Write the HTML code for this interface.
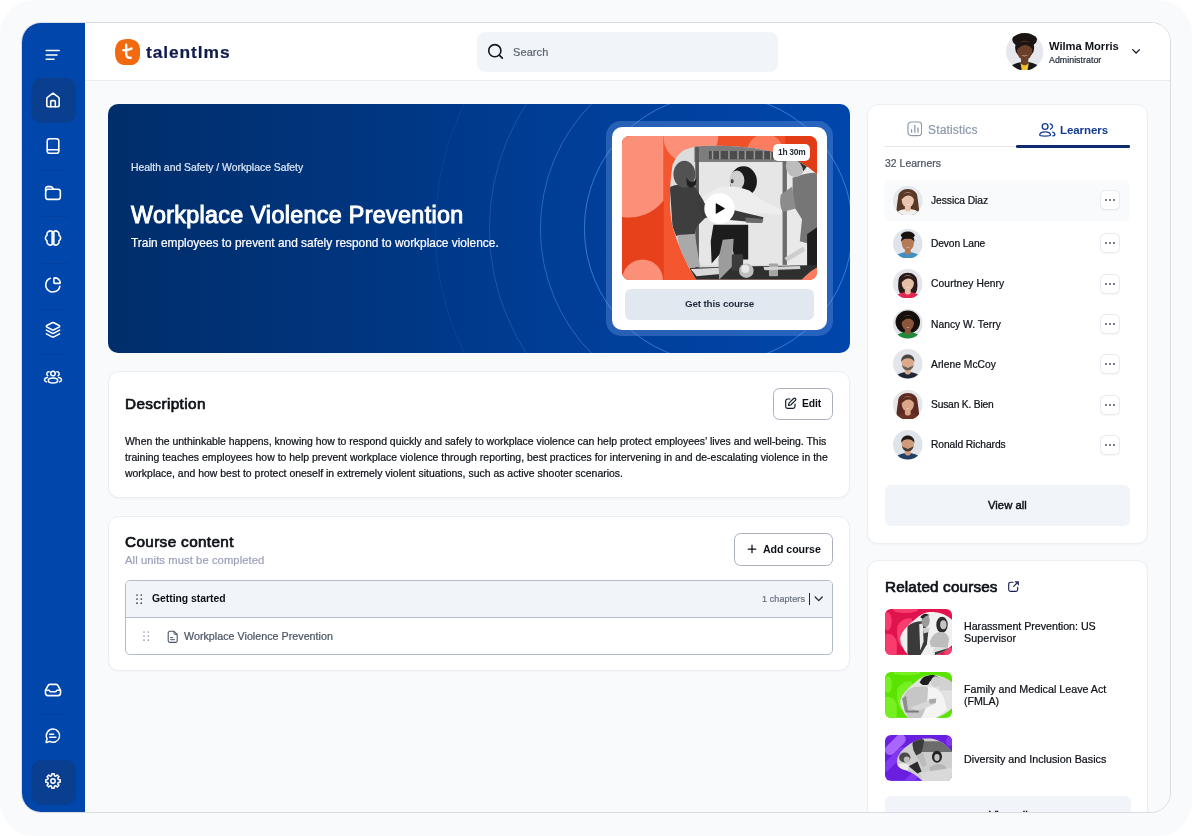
<!DOCTYPE html>
<html lang="en">
<head>
<meta charset="utf-8">
<title>Workplace Violence Prevention - TalentLMS</title>
<style>
*{box-sizing:border-box;margin:0;padding:0}
html,body{width:1192px;height:836px;overflow:hidden;background:#fff;font-family:"Liberation Sans",sans-serif;color:#0d1117}
.abs{position:absolute}
.t{position:absolute;white-space:nowrap;line-height:1;will-change:transform;-webkit-text-stroke:.22px currentColor}
#stage{position:relative;width:1192px;height:836px;overflow:hidden;background:#f8fafc;border-radius:34px}
#win{position:absolute;left:22px;top:23px;width:1148px;height:789px;border-radius:19px;background:#f8fafc;overflow:hidden}
#winb{position:absolute;left:21px;top:22px;width:1150px;height:791px;border-radius:20px;border:1px solid #d9dde3;pointer-events:none}
#side{position:absolute;left:0;top:0;width:62.600px;height:789px;background:#0046ab}
.navact{position:absolute;left:8.5px;width:45px;height:45px;border-radius:11px;background:#0a3e8e}
.navsep{position:absolute;left:18px;width:27px;height:1px;background:rgba(0,30,90,.16)}
.ico{position:absolute;fill:none;stroke:#fff;stroke-linecap:round;stroke-linejoin:round}
#head{position:absolute;left:63px;top:0;width:1085px;height:58px;background:#fff;border-bottom:1px solid #e9edf2}
#search{position:absolute;left:455px;top:9px;width:301px;height:39.500px;border-radius:8px;background:#f1f5f9}
.card{position:absolute;background:#fff;border:1px solid #ebeff3;border-radius:11px;box-shadow:0 1px 2px rgba(16,24,40,.03)}
#hero{position:absolute;left:86px;top:81px;width:742px;height:249px;border-radius:10px;overflow:hidden;background:linear-gradient(90deg,#002e6b 0%,#00347c 30%,#003e97 62%,#0046ab 100%)}
.btn{position:absolute;border:1px solid #aab1bd;border-radius:6.500px;background:#fff}
.more{position:absolute;left:1078px;width:20px;height:20px;border:1px solid #e7eaf0;border-radius:5.500px;background:#fff;box-shadow:0 1px 1.500px rgba(16,24,40,.04)}
.more i{position:absolute;top:8px;width:2px;height:2px;border-radius:50%;background:#4b5563}
.av{position:absolute;left:871.500px;width:29.500px;height:29.500px;border-radius:50%}
.thumb{position:absolute;left:862.700px;width:67.300px;height:46px;border-radius:6px;overflow:hidden}
</style>
</head>
<body>
<div id="stage">
<div id="winb"></div>
<div id="win">
  <div id="side">
    <svg class="abs" style="left:23px;top:25.600px" width="16" height="12" viewBox="0 0 16 12" fill="none" stroke="#fff" stroke-width="1.500" stroke-linecap="round"><path d="M1.200 1.400h13M1.200 5.900h10.800M1.200 10.300h7.800"/></svg>
    <div class="navact" style="top:55px"></div>
    <div class="navact" style="top:736.500px"></div>
    <div class="navsep" style="top:147px"></div>
    <div class="navsep" style="top:193px"></div>
    <div class="navsep" style="top:239.5px"></div>
    <div class="navsep" style="top:285.5px"></div>
    <div class="navsep" style="top:331px"></div>
    <div class="navsep" style="top:691px"></div>
    <!-- home -->
    <svg class="ico" style="left:19.1px;top:65.4px" width="24" height="24" viewBox="-12 -12 24 24" stroke-width="1.6"><path d="M0-6.800 5.300-2.900a2 2 0 0 1 .900 1.700V4.900a1.900 1.900 0 0 1-1.900 1.900h-8.600a1.900 1.900 0 0 1-1.900-1.900V-1.200a2 2 0 0 1 .900-1.700Z"/><path d="M-2.300 6.700V1.600a1 1 0 0 1 1-1h2.600a1 1 0 0 1 1 1v5.100"/></svg>
    <!-- book -->
    <svg class="ico" style="left:19.0px;top:111.4px" width="24" height="24" viewBox="-12 -12 24 24" stroke-width="1.6"><rect x="-5.800" y="-7.200" width="11.600" height="14.400" rx="2.300"/><path d="M-5.800 3.700H5.800"/></svg>
    <!-- folder -->
    <svg class="ico" style="left:19.0px;top:157.5px" width="24" height="24" viewBox="-12 -12 24 24" stroke-width="1.6"><rect x="-7.350" y="-3.700" width="14.700" height="10.100" rx="2.300"/><path d="M-7.350-2v-2.400a2 2 0 0 1 2-2h2.900a2 2 0 0 1 1.500.700l1.700 2"/></svg>
    <!-- brain -->
    <svg class="ico" style="left:19.0px;top:203.3px" width="24" height="24" viewBox="-12 -12 24 24" stroke-width="1.6"><path d="M-.85-6.600A3.500 3.500 0 0 0-6-2.700 3.050 3.050 0 0 0-6 2.700 3.500 3.500 0 0 0-.85 6.600Z"/><path d="M-.85-6.600A3.500 3.500 0 0 0-6-2.700 3.050 3.050 0 0 0-6 2.700 3.500 3.500 0 0 0-.85 6.600Z" transform="scale(-1 1)"/></svg>
    <!-- pie -->
    <svg class="ico" style="left:19.2px;top:249.5px" width="24" height="24" viewBox="-12 -12 24 24" stroke-width="1.6"><path d="M-2.76 -6.68A7.100 7.100 0 1 0 6.84 1.38"/><path d="M.900-6.500a.6.600 0 0 1 .600-.600A5.900 5.900 0 0 1 7.300-2.200a.6.600 0 0 1-.600.600H1.700a.8.800 0 0 1-.800-.800Z"/></svg>
    <!-- layers -->
    <svg class="ico" style="left:19.1px;top:295.3px" width="24" height="24" viewBox="-12 -12 24 24" stroke-width="1.6"><path d="M-.9-7.200a2 2 0 0 1 1.800 0l5.200 2.700a.9.900 0 0 1 0 1.600L.9-.2a2 2 0 0 1-1.800 0l-5.200-2.700a.9.900 0 0 1 0-1.600Z"/><path d="M-6.600.1-.9 3.100a2 2 0 0 0 1.800 0L6.600.1"/><path d="M-6.600 3.900-.9 6.900a2 2 0 0 0 1.800 0l5.700-3"/></svg>
    <!-- people -->
    <svg class="ico" style="left:18.9px;top:341.5px" width="24" height="24" viewBox="-12 -12 24 24" stroke-width="1.5"><circle cx="0" cy="-3.500" r="2.300"/><ellipse cx="0" cy="3.400" rx="4.700" ry="2.500"/><path d="M-3.900-5.200a2.100 2.100 0 0 0-1.300 3.900M-5.600.6c-1.700.3-2.900 1.200-2.900 2.400 0 .8.700 1.500 2 1.900"/><path d="M-3.900-5.200a2.100 2.100 0 0 0-1.300 3.900M-5.600.6c-1.700.3-2.900 1.200-2.900 2.400 0 .8.700 1.500 2 1.900" transform="scale(-1 1)"/></svg>
    <!-- inbox -->
    <svg class="ico" style="left:19.2px;top:654.5px" width="24" height="24" viewBox="-12 -12 24 24" stroke-width="1.6"><path d="M-7.500.3-5.200-4a2.600 2.600 0 0 1 2.300-1.600h5.800A2.600 2.600 0 0 1 5.200-4L7.500.3v3a2.300 2.300 0 0 1-2.300 2.300H-5.200A2.300 2.300 0 0 1-7.500 3.300Z"/><path d="M-7.500.3h3.300a.8.800 0 0 1 .700.500 1.600 1.600 0 0 0 1.500 1h4a1.600 1.600 0 0 0 1.500-1 .8.800 0 0 1 .700-.500h3.300"/></svg>
    <!-- chat -->
    <svg class="ico" style="left:19.1px;top:700.5px" width="24" height="24" viewBox="-12 -12 24 24" stroke-width="1.5"><path d="M0-6.900a6.600 6.600 0 1 1-3.300 12.300L-6.300 6.500a.5.500 0 0 1-.6-.6l1-3.100A6.600 6.600 0 0 1 0-6.900Z"/><path d="M-3.300-1.700H.6M-3.300 1.200h6.200"/></svg>
    <!-- gear -->
    <svg class="ico" style="left:19.0px;top:746.1px" width="24" height="24" viewBox="-12 -12 24 24" stroke-width="1.5"><circle r="2.200"/><path d="M-1.20 -7.20 L1.20 -7.20 L1.42 -5.31 L2.75 -4.76 L4.24 -5.94 L5.94 -4.24 L4.76 -2.75 L5.31 -1.42 L7.20 -1.20 L7.20 1.20 L5.31 1.42 L4.76 2.75 L5.94 4.24 L4.24 5.94 L2.75 4.76 L1.42 5.31 L1.20 7.20 L-1.20 7.20 L-1.42 5.31 L-2.75 4.76 L-4.24 5.94 L-5.94 4.24 L-4.76 2.75 L-5.31 1.42 L-7.20 1.20 L-7.20 -1.20 L-5.31 -1.42 L-4.76 -2.75 L-5.94 -4.24 L-4.24 -5.94 L-2.75 -4.76 L-1.42 -5.31Z"/></svg>
  </div>
  <div id="head"></div>
  <div id="search"></div>
  <div id="hero">
  <svg style="position:absolute;left:0;top:0" width="742" height="249" viewBox="0 0 742 249" fill="none" stroke="#5aa7ff" stroke-width="1"><circle cx="610.4" cy="124.6" r="134" stroke-opacity="0.55"/><circle cx="610.4" cy="124.6" r="178" stroke-opacity="0.4"/><circle cx="610.4" cy="124.6" r="229" stroke-opacity="0.24"/><circle cx="610.4" cy="124.6" r="283" stroke-opacity="0.1"/></svg>
  </div>
  <div class="card" style="left:86px;top:348px;width:742px;height:127px"></div>
  <div class="card" style="left:86px;top:493px;width:742px;height:155px"></div>
  <div class="card" style="left:845.400px;top:80.600px;width:280.600px;height:440px"></div>
  <div class="card" style="left:845.400px;top:537px;width:280.600px;height:300px"></div>
  <svg style="position:absolute;left:93.0px;top:15.8px;" width="25.2" height="26.4" viewBox="0 0 25.2 26.4"><path d="M12.600 0C20.500 0 25.200 3.200 25.200 13.200S20.500 26.400 12.600 26.400 0 23.200 0 13.200 4.700 0 12.600 0Z" fill="#f26a0f"/><path d="M11.200 5.700v9.500c0 2.400 1.600 3.900 4.500 3.600M8.300 11.200c2.600.2 5.500-.3 8.200-1.600" fill="none" stroke="#fff" stroke-width="2.350" stroke-linecap="round"/></svg>
  <svg style="position:absolute;left:464.0px;top:19.0px;" width="20.0" height="20.0" viewBox="486 42 20 20"><circle cx="494.800" cy="50.700" r="6.100" fill="none" stroke="#111827" stroke-width="1.600"/><path d="M499.300 55.200l3 2.900" stroke="#111827" stroke-width="1.700" stroke-linecap="round"/></svg>
  <svg style="position:absolute;left:1108.0px;top:22.0px;" width="12.0" height="12.0" viewBox="1130 45 12 12"><path d="M1132.700 49.600l3.400 3.400 3.400-3.400" fill="none" stroke="#111827" stroke-width="1.300" stroke-linecap="round" stroke-linejoin="round"/></svg>
  <div style="position:absolute;left:584.1px;top:98.1px;width:226.5px;height:214.9px;border-radius:15px;background:rgba(120,165,235,.32)"></div>
  <div style="position:absolute;left:589.6px;top:103.6px;width:215.5px;height:203.9px;border-radius:10px;background:#fff"></div>
  <div style="position:absolute;left:602.8px;top:266.0px;width:189.3px;height:31.0px;border-radius:6px;background:#e2e8f0"></div>
  <div class="btn" style="position:absolute;left:751.0px;top:365.0px;width:60.0px;height:31.5px;"></div>
  <svg style="position:absolute;left:762.0px;top:374.0px;" width="13.0" height="13.0" viewBox="0 0 13 13"><path d="M6 2H3.600A1.900 1.900 0 0 0 1.700 3.900v5.500a1.900 1.900 0 0 0 1.900 1.900h5.500A1.900 1.900 0 0 0 11 9.400V7" fill="none" stroke="#111827" stroke-width="1.150" stroke-linecap="round"/><path d="M9.600 1.500a1.200 1.200 0 0 1 1.800 1.800L6.700 8l-2.200.5.500-2.300Z" fill="none" stroke="#111827" stroke-width="1.150" stroke-linejoin="round"/></svg>
  <div class="btn" style="position:absolute;left:712.0px;top:510.0px;width:99.0px;height:32.5px;"></div>
  <svg style="position:absolute;left:724.7px;top:521.3px;" width="10.0" height="10.0" viewBox="0 0 10 10"><path d="M5 1.200v7.600M1.200 5h7.600" stroke="#0d1117" stroke-width="1.250" stroke-linecap="round"/></svg>
  <div style="position:absolute;left:103.0px;top:557.0px;width:708.0px;height:75.0px;border:1px solid #b4bbc8;border-radius:5px;background:#fff;overflow:hidden"><div style="position:absolute;left:0;top:0;right:0;height:37px;background:#f1f5f9;border-bottom:1px solid #b4bbc8"></div></div>
  <svg style="position:absolute;left:114.0px;top:570.6px;" width="7.0" height="11.0" viewBox="0 0 7 11"><g fill="#374151"><circle cx="1.0" cy="1.0" r=".850"/><circle cx="1.0" cy="5.1" r=".850"/><circle cx="1.0" cy="9.2" r=".850"/><circle cx="5.3" cy="1.0" r=".850"/><circle cx="5.3" cy="5.1" r=".850"/><circle cx="5.3" cy="9.2" r=".850"/></g></svg>
  <svg style="position:absolute;left:121.2px;top:608.2px;" width="7.0" height="11.0" viewBox="0 0 7 11"><g fill="#9aa3b2"><circle cx="1.0" cy="1.0" r=".850"/><circle cx="1.0" cy="5.1" r=".850"/><circle cx="1.0" cy="9.2" r=".850"/><circle cx="5.3" cy="1.0" r=".850"/><circle cx="5.3" cy="5.1" r=".850"/><circle cx="5.3" cy="9.2" r=".850"/></g></svg>
  <svg style="position:absolute;left:145.0px;top:606.5px;" width="12.0" height="13.5" viewBox="0 0 12 13.500"><path d="M2.800 1.300h4.200l3.200 3.200v6.300a1.600 1.600 0 0 1-1.600 1.600H2.800a1.600 1.600 0 0 1-1.600-1.600V2.900a1.600 1.600 0 0 1 1.600-1.600Z" fill="none" stroke="#4b5565" stroke-width="1.100" stroke-linejoin="round"/><path d="M7 1.500v1.800a1.200 1.200 0 0 0 1.200 1.200H10" fill="none" stroke="#4b5565" stroke-width="1"/><path d="M3.600 7.600h2.200M3.600 9.700h4" stroke="#4b5565" stroke-width="1" stroke-linecap="round"/></svg>
  <div style="position:absolute;left:786.7px;top:569.7px;width:1.3px;height:12.3px;background:#1f2937"></div>
  <svg style="position:absolute;left:790.0px;top:570.0px;" width="13.0" height="12.0" viewBox="812 593 13 12"><path d="M815.200 597l3.500 3.600 3.500-3.600" fill="none" stroke="#1f2937" stroke-width="1.300" stroke-linecap="round" stroke-linejoin="round"/></svg>
  <div style="position:absolute;left:862.4px;top:123.2px;width:131.6px;height:1.0px;background:#e5e9ef"></div>
  <div style="position:absolute;left:993.8px;top:122.2px;width:114.6px;height:2.5px;background:#0f2a6e;border-radius:1.200px"></div>
  <svg style="position:absolute;left:884.5px;top:98.3px;" width="15.6" height="15.6" viewBox="0 0 15.600 15.600"><rect x="1" y="1" width="13.600" height="13.600" rx="3.200" fill="none" stroke="#8d98ad" stroke-width="1.200"/><path d="M4.600 11.200V8.600M7.800 11.200V4.500M11 11.200V7" stroke="#8d98ad" stroke-width="1.300" stroke-linecap="round"/></svg>
  <svg style="position:absolute;left:1015.5px;top:98.5px;" width="18.5" height="16.0" viewBox="1037.500 121.500 18.500 16"><g fill="none" stroke="#123a94" stroke-width="1.350" stroke-linecap="round"><circle cx="1044.600" cy="126" r="2.900"/><path d="M1039.200 134.600c0-2.200 2.400-3.300 5.400-3.300s5.400 1.100 5.400 3.300c0 1.300-10.800 1.300-10.800 0Z"/><path d="M1049.800 123.300a2.800 2.800 0 0 1 .3 5.400M1052.300 131.600c1.300.5 2.100 1.400 2.100 2.600 0 .7-.9 1.100-2 1.200"/></g></svg>
  <div style="position:absolute;left:862.4px;top:157.2px;width:246.0px;height:40.7px;border-radius:6px;background:#f8fafc"></div>
  <div class="more" style="top:167px"><i style="left:4px"></i><i style="left:8px"></i><i style="left:12px"></i></div>
  <div class="more" style="top:210px"><i style="left:4px"></i><i style="left:8px"></i><i style="left:12px"></i></div>
  <div class="more" style="top:251px"><i style="left:4px"></i><i style="left:8px"></i><i style="left:12px"></i></div>
  <div class="more" style="top:291px"><i style="left:4px"></i><i style="left:8px"></i><i style="left:12px"></i></div>
  <div class="more" style="top:331px"><i style="left:4px"></i><i style="left:8px"></i><i style="left:12px"></i></div>
  <div class="more" style="top:372px"><i style="left:4px"></i><i style="left:8px"></i><i style="left:12px"></i></div>
  <div class="more" style="top:412px"><i style="left:4px"></i><i style="left:8px"></i><i style="left:12px"></i></div>
  <div style="position:absolute;left:863.1px;top:462.4px;width:244.9px;height:40.2px;border-radius:6px;background:#f1f5f9"></div>
  <div style="position:absolute;left:862.8px;top:773.0px;width:245.8px;height:40.0px;border-radius:6px;background:#f1f5f9"></div>
  <svg style="position:absolute;left:985.3px;top:557.0px;" width="13.0" height="13.0" viewBox="0 0 13 13"><path d="M6 2.200H3.500a1.800 1.800 0 0 0-1.800 1.800v5.500a1.800 1.800 0 0 0 1.800 1.800h5.400a1.800 1.800 0 0 0 1.800-1.800V7.400" fill="none" stroke="#182258" stroke-width="1.150" stroke-linecap="round"/><path d="M8.300 1.800h3v3M11.100 2 6.700 6.400" fill="none" stroke="#182258" stroke-width="1.150" stroke-linecap="round" stroke-linejoin="round"/></svg>
  <svg style="position:absolute;left:600.0px;top:112.9px;border-radius:8px" width="195.100" height="143.800" viewBox="22 22 1073 790" preserveAspectRatio="none">
<defs><clipPath id="ph"><path d="M400 86Q500 64 700 84Q860 98 1000 165Q1060 200 1100 238V740Q1060 760 1010 812H430Q350 690 300 520Q270 380 300 180Q330 100 400 86Z"/></clipPath></defs>
<rect x="22" y="22" width="1073" height="790" fill="#e7411b"/>
<rect x="250" y="22" width="230" height="790" fill="#f4562f"/>
<rect x="470" y="22" width="460" height="120" fill="#f0502a"/>
<rect x="920" y="22" width="175" height="260" fill="#e23c17"/>
<circle cx="400" cy="22" r="152" fill="#fb8f78"/>
<rect x="22" y="22" width="228" height="790" fill="#e7411b"/>
<path d="M22 22H250V376A240 240 0 0 1 22 467Z" fill="#fb8f78"/>
<circle cx="810" cy="110" r="100" fill="#fb7c5f"/>
<circle cx="135" cy="812" r="112" fill="#fb8f78"/>
<circle cx="1095" cy="830" r="90" fill="#fb7c5f"/>
<g clip-path="url(#ph)">
<rect x="250" y="50" width="860" height="780" fill="#dcdcdc"/>
<rect x="420" y="70" width="500" height="95" fill="#7d7d7d"/>
<path d="M500 105H880V150H500Z" fill="#4c4c4c"/><path d="M520 105v45M560 105v45M610 105v45M660 105v45M700 105v45M750 105v45M800 105v45M840 105v45" stroke="#9a9a9a" stroke-width="8"/>
<rect x="445" y="165" width="470" height="565" fill="#e6e6e6"/>
<rect x="425" y="80" width="20" height="670" fill="#565656"/>
<rect x="905" y="160" width="24" height="570" fill="#6c6c6c"/>
<rect x="930" y="165" width="180" height="570" fill="#e9e9e9"/>
<!-- right man -->
<path d="M960 252Q1030 222 1100 224V520L1045 612 1000 600 1012 480 962 400Z" fill="#767676"/>
<path d="M1040 562 1100 520V762L1040 752Z" fill="#1e1e1e"/>
<ellipse cx="975" cy="185" rx="52" ry="62" fill="#bdbdbd"/>
<path d="M985 130Q1030 120 1050 175L1020 215Q1010 170 985 160Z" fill="#333"/>
<path d="M895 345 958 300 978 420 905 440Q885 400 895 345Z" fill="#8c8c8c"/>
<path d="M915 692 1018 630 1030 652 932 712Z" fill="#cdcdcd"/>
<!-- woman -->
<ellipse cx="690" cy="272" rx="74" ry="84" fill="#1a1a1a"/>
<ellipse cx="654" cy="266" rx="41" ry="54" fill="#cfcfcf"/>
<ellipse cx="628" cy="270" rx="8" ry="12" fill="#444"/>
<path d="M450 362 560 302Q640 290 722 322L802 382 902 430 896 456 762 442 722 512H540L530 420 470 402Z" fill="#eeeeee"/>
<path d="M525 510H716V700H642L622 600 515 722 510 600Z" fill="#1c1c1c"/>
<!-- left man -->
<path d="M285 302Q330 280 422 300L472 380 482 470 432 520 422 562 320 572 300 520Z" fill="#3e3e3e"/>
<path d="M325 566 422 560 452 742H386L340 650Z" fill="#a9a9a9"/>
<ellipse cx="365" cy="232" rx="60" ry="74" fill="#525252"/>
<path d="M375 250Q410 300 432 250L428 290Q405 318 380 292Z" fill="#1f1f1f"/>
<path d="M432 380 800 468 792 500 470 470Z" fill="#3a3a3a"/>
<path d="M700 470 800 478 792 500 705 498Z" fill="#6b6b6b"/>
<!-- table -->
<path d="M392 746 1100 730V820H430Z" fill="#2f2f2f"/>
<path d="M400 752 562 746 562 780 432 792Z" fill="#d9d9d9"/>
<path d="M576 592 636 586 626 742 556 812 552 700Z" fill="#9c9c9c"/>
<rect x="626" y="672" width="62" height="90" rx="8" fill="#3c3c3c"/>
<circle cx="706" cy="762" r="40" fill="#bfbfbf"/><circle cx="700" cy="752" r="22" fill="#e9e9e9"/>
<rect x="830" y="722" width="50" height="70" rx="5" fill="#a5a5a5"/>
<path d="M800 742 1000 736 1004 752 806 760Z" fill="#d3d3d3"/>
</g>
</svg>
  <div style="position:absolute;left:751.1px;top:120.8px;width:36.600px;height:17px;border-radius:5px;background:#fff"></div>
  <svg style="position:absolute;left:682.0px;top:169.5px" width="31" height="31" viewBox="-15.500 -15.500 31 31"><circle r="15.200" fill="#fff"/><path d="M-3.200-4.600 4.600 0-3.200 4.600Z" fill="#111" stroke="#111" stroke-width="1.200" stroke-linejoin="round"/></svg>
  <svg style="position:absolute;left:983.8px;top:10.1px" width="37.3" height="37.3" viewBox="-50 -50 100 100"><defs><clipPath id="ch"><circle r="50"/></clipPath></defs><g clip-path="url(#ch)"><rect x="-50" y="-50" width="100" height="100" fill="#e6e8ee"/><g transform="translate(0 4) scale(1.22)"><ellipse cx="0" cy="-30" rx="27" ry="17" fill="#1a1412"/><ellipse cx="0" cy="-12" rx="21" ry="22" fill="#1a1412"/><path d="M-42 52C-42 30-24 22-9 20H9C24 22 42 30 42 52Z" fill="#17181c"/><path d="M-9 22H9L4 52H-4Z" fill="#f2c230"/><path d="M-8 6H8V22C4 28-4 28-8 22Z" fill="#6b3f2a"/><ellipse cx="0" cy="-6" rx="17" ry="21" fill="#6b3f2a"/><path d="M-18-6C-20-32 20-32 18-6C12-20-4-24-18-6Z" fill="#1a1412"/><path d="M-7 4Q0 10 7 4Q0 7-7 4Z" fill="#fff" opacity=".9"/></g></g></svg>
  <svg style="position:absolute;left:871.4px;top:162.6px" width="29.6" height="29.6" viewBox="-50 -50 100 100"><defs><clipPath id="c0"><circle r="50"/></clipPath></defs><g clip-path="url(#c0)"><rect x="-50" y="-50" width="100" height="100" fill="#e4e7eb"/><g transform="translate(0 4) scale(1.22)"><path d="M-27-12C-27-44 27-44 27-12C30 10 34 30 30 50H-30C-34 30-30 10-27-12Z" fill="#5a3826"/><path d="M-42 52C-42 30-24 22-9 20H9C24 22 42 30 42 52Z" fill="#f1efee"/><path d="M-8 6H8V22C4 28-4 28-8 22Z" fill="#e9c4ae"/><ellipse cx="0" cy="-6" rx="17" ry="21" fill="#e9c4ae"/><path d="M-18-6C-20-32 20-32 18-6C12-20-4-24-18-6Z" fill="#5a3826"/><path d="M-7 4Q0 10 7 4Q0 7-7 4Z" fill="#fff" opacity=".9"/></g></g></svg>
  <svg style="position:absolute;left:871.4px;top:205.5px" width="29.6" height="29.6" viewBox="-50 -50 100 100"><defs><clipPath id="c1"><circle r="50"/></clipPath></defs><g clip-path="url(#c1)"><rect x="-50" y="-50" width="100" height="100" fill="#dfe4ec"/><g transform="translate(0 4) scale(1.22)"><path d="M-42 52C-42 30-24 22-9 20H9C24 22 42 30 42 52Z" fill="#3f8fc3"/><path d="M-8 6H8V22C4 28-4 28-8 22Z" fill="#b57a56"/><ellipse cx="0" cy="-6" rx="17" ry="21" fill="#b57a56"/><path d="M-18-8C-22-36 22-36 18-8C14-22-14-22-18-8Z" fill="#16110f"/><ellipse cx="0" cy="-27" rx="19" ry="10" fill="#16110f"/><path d="M-7 4Q0 10 7 4Q0 7-7 4Z" fill="#fff" opacity=".9"/></g></g></svg>
  <svg style="position:absolute;left:871.4px;top:245.8px" width="29.6" height="29.6" viewBox="-50 -50 100 100"><defs><clipPath id="c2"><circle r="50"/></clipPath></defs><g clip-path="url(#c2)"><rect x="-50" y="-50" width="100" height="100" fill="#e3e5ea"/><g transform="translate(0 4) scale(1.22)"><path d="M-26-10C-26-42 26-42 26-10C28 6 26 16 22 22H-22C-26 16-28 6-26-10Z" fill="#2a1b18"/><path d="M-42 52C-42 30-24 22-9 20H9C24 22 42 30 42 52Z" fill="#e02651"/><path d="M-8 6H8V22C4 28-4 28-8 22Z" fill="#e6bfa8"/><ellipse cx="0" cy="-6" rx="17" ry="21" fill="#e6bfa8"/><path d="M-18-6C-20-32 20-32 18-6C12-20-4-24-18-6Z" fill="#2a1b18"/><path d="M-7 4Q0 10 7 4Q0 7-7 4Z" fill="#fff" opacity=".9"/></g></g></svg>
  <svg style="position:absolute;left:871.4px;top:286.1px" width="29.6" height="29.6" viewBox="-50 -50 100 100"><defs><clipPath id="c3"><circle r="50"/></clipPath></defs><g clip-path="url(#c3)"><rect x="-50" y="-50" width="100" height="100" fill="#dfe3e8"/><g transform="translate(0 4) scale(1.22)"><ellipse cx="0" cy="-8" rx="34" ry="32" fill="#15100e"/><path d="M-42 52C-42 30-24 22-9 20H9C24 22 42 30 42 52Z" fill="#1f8a3c"/><path d="M-8 6H8V22C4 28-4 28-8 22Z" fill="#8a5538"/><ellipse cx="0" cy="-6" rx="17" ry="21" fill="#8a5538"/><path d="M-18-6C-20-32 20-32 18-6C12-20-4-24-18-6Z" fill="#15100e"/><path d="M-7 4Q0 10 7 4Q0 7-7 4Z" fill="#fff" opacity=".9"/></g></g></svg>
  <svg style="position:absolute;left:871.4px;top:326.4px" width="29.6" height="29.6" viewBox="-50 -50 100 100"><defs><clipPath id="c4"><circle r="50"/></clipPath></defs><g clip-path="url(#c4)"><rect x="-50" y="-50" width="100" height="100" fill="#e2e5ea"/><g transform="translate(0 4) scale(1.22)"><path d="M-42 52C-42 30-24 22-9 20H9C24 22 42 30 42 52Z" fill="#1d2738"/><path d="M-8 6H8V22C4 28-4 28-8 22Z" fill="#d9a98a"/><ellipse cx="0" cy="-6" rx="17" ry="21" fill="#d9a98a"/><path d="M-18-8C-22-36 22-36 18-8C14-22-14-22-18-8Z" fill="#4a4744"/><path d="M-16 0C-14 20 14 20 16 0C10 8-10 8-16 0Z" fill="#4a4744" opacity=".75"/><path d="M-7 4Q0 10 7 4Q0 7-7 4Z" fill="#fff" opacity=".9"/></g></g></svg>
  <svg style="position:absolute;left:871.4px;top:366.7px" width="29.6" height="29.6" viewBox="-50 -50 100 100"><defs><clipPath id="c5"><circle r="50"/></clipPath></defs><g clip-path="url(#c5)"><rect x="-50" y="-50" width="100" height="100" fill="#e4e6ea"/><g transform="translate(0 4) scale(1.22)"><path d="M-27-12C-27-44 27-44 27-12C30 10 34 30 30 50H-30C-34 30-30 10-27-12Z" fill="#5c2a20"/><path d="M-42 52C-42 30-24 22-9 20H9C24 22 42 30 42 52Z" fill="#6a3226"/><path d="M-8 6H8V22C4 28-4 28-8 22Z" fill="#d8a688"/><ellipse cx="0" cy="-6" rx="17" ry="21" fill="#d8a688"/><path d="M-18-6C-20-32 20-32 18-6C12-20-4-24-18-6Z" fill="#5c2a20"/><path d="M-7 4Q0 10 7 4Q0 7-7 4Z" fill="#fff" opacity=".9"/></g></g></svg>
  <svg style="position:absolute;left:871.4px;top:407.0px" width="29.6" height="29.6" viewBox="-50 -50 100 100"><defs><clipPath id="c6"><circle r="50"/></clipPath></defs><g clip-path="url(#c6)"><rect x="-50" y="-50" width="100" height="100" fill="#dfe3ea"/><g transform="translate(0 4) scale(1.22)"><path d="M-42 52C-42 30-24 22-9 20H9C24 22 42 30 42 52Z" fill="#213f66"/><path d="M-8 6H8V22C4 28-4 28-8 22Z" fill="#cf9b78"/><ellipse cx="0" cy="-6" rx="17" ry="21" fill="#cf9b78"/><path d="M-18-8C-22-36 22-36 18-8C14-22-14-22-18-8Z" fill="#221a17"/><path d="M-16 0C-14 20 14 20 16 0C10 8-10 8-16 0Z" fill="#221a17" opacity=".75"/><path d="M-7 4Q0 10 7 4Q0 7-7 4Z" fill="#fff" opacity=".9"/></g></g></svg>
  <svg style="position:absolute;left:863.0px;top:586.0px;border-radius:6px" width="67.400" height="45.900" viewBox="75 75 1005 685" preserveAspectRatio="none"><rect x="75" y="75" width="1005" height="685" fill="#e0134f"/>
<g fill="#f93c6e"><ellipse cx="115" cy="260" rx="60" ry="135"/><path d="M80 450Q200 420 250 560V760H80Z"/><path d="M260 330Q330 200 470 215Q520 300 420 420Q330 520 330 650Q230 560 260 330Z"/><ellipse cx="380" cy="85" rx="185" ry="48"/><circle cx="1030" cy="720" r="70"/></g>
<defs><clipPath id="t1"><path d="M300 500Q330 380 520 230Q640 120 760 118Q960 120 1090 250V600Q980 720 800 770H430Q300 640 300 500Z"/></clipPath></defs>
<g clip-path="url(#t1)"><rect x="280" y="100" width="820" height="680" fill="#f0f0f0"/>
<path d="M410 330Q520 250 640 260L720 420 700 600 600 770H410Z" fill="#3a3a3a"/>
<path d="M585 300 640 290 650 560 600 700Z" fill="#e8e8e8"/>
<ellipse cx="680" cy="250" rx="62" ry="95" fill="#9a9a9a"/><path d="M600 200Q660 110 745 170Q690 160 640 220Z" fill="#222"/>
<path d="M640 360 740 350 730 420 650 440Z" fill="#cfcfcf"/>
<ellipse cx="925" cy="310" rx="85" ry="120" fill="#2b2b2b"/><ellipse cx="945" cy="310" rx="48" ry="66" fill="#c4c4c4"/>
<path d="M740 560Q800 420 900 420Q1000 410 1030 520L1010 660 760 640Z" fill="#bdbdbd"/><path d="M800 650H1000V770H790Z" fill="#dcdcdc"/><path d="M820 720 1080 640V770H820Z" fill="#3b3b3b"/></g></svg>
  <svg style="position:absolute;left:863.0px;top:649.0px;border-radius:6px" width="67.400" height="45.900" viewBox="75 75 1005 685" preserveAspectRatio="none"><rect x="75" y="75" width="1005" height="685" fill="#5be300"/>
<g fill="#76f022"><ellipse cx="120" cy="260" rx="55" ry="130"/><path d="M80 450Q200 420 250 560V760H80Z"/><path d="M260 330Q330 200 470 215Q520 300 420 420Q330 520 330 650Q230 560 260 330Z"/><ellipse cx="400" cy="85" rx="200" ry="40"/></g>
<defs><clipPath id="t2"><path d="M300 500Q330 380 520 230Q640 120 760 118Q960 120 1090 250V600Q980 720 800 770H430Q300 640 300 500Z"/></clipPath></defs>
<g clip-path="url(#t2)"><rect x="280" y="100" width="820" height="680" fill="#e2e2e2"/>
<rect x="880" y="150" width="220" height="200" fill="#d2d2d2"/>
<path d="M590 230Q640 110 800 120Q860 130 880 170Q760 160 720 260Q640 290 590 230Z" fill="#1e1e1e"/>
<ellipse cx="830" cy="220" rx="70" ry="80" fill="#cfcfcf"/>
<path d="M340 470Q380 330 520 300L700 290 760 420 700 620 600 770H420L380 650Z" fill="#c6c6c6"/>
<path d="M720 300Q900 300 960 480L1000 640 820 770H620L700 560Z" fill="#f4f4f4"/>
<path d="M450 600Q600 560 760 480L840 500 800 560 560 660Z" fill="#d8d8d8"/><path d="M730 480 840 470 830 540 740 550Z" fill="#a9a9a9"/>
<path d="M330 470 390 430 420 660 370 660Z" fill="#8e8e8e"/><rect x="380" y="650" width="200" height="30" fill="#7a7a7a"/></g></svg>
  <svg style="position:absolute;left:863.0px;top:712.0px;border-radius:6px" width="67.400" height="45.900" viewBox="75 75 1005 685" preserveAspectRatio="none"><rect x="75" y="75" width="1005" height="685" fill="#6a1ee0"/>
<g stroke-linecap="round" fill="none"><path d="M150 300 310 140" stroke="#a866ff" stroke-width="150"/><path d="M80 560 330 320" stroke="#8237f0" stroke-width="120"/><path d="M430 760 560 640" stroke="#8237f0" stroke-width="110"/></g>
<ellipse cx="1040" cy="170" rx="55" ry="70" fill="#8237f0"/>
<defs><clipPath id="t3"><path d="M250 470Q260 330 460 200Q600 110 760 125Q960 160 1090 350V770H640Q520 640 380 600Q250 570 250 470Z"/></clipPath></defs>
<g clip-path="url(#t3)"><rect x="240" y="100" width="860" height="680" fill="#cdcdcd"/>
<path d="M590 170H1000L1090 330H600Z" fill="#6c6c6c"/>
<path d="M490 180Q560 90 660 150L640 260 600 400 540 380Q470 280 490 180Z" fill="#3a3a3a"/>
<path d="M540 380 640 330 700 520 640 560Z" fill="#bcbcbc"/>
<ellipse cx="370" cy="410" rx="85" ry="75" fill="#4a4a4a"/><ellipse cx="400" cy="440" rx="45" ry="45" fill="#bdbdbd"/>
<path d="M260 520Q330 470 430 520L420 600 300 590Z" fill="#ededed"/>
<path d="M430 540 560 470 620 620 560 650Z" fill="#2b2b2b"/>
<ellipse cx="850" cy="400" rx="75" ry="90" fill="#222"/><ellipse cx="850" cy="410" rx="40" ry="52" fill="#c2c2c2"/>
<path d="M740 560Q850 470 980 540L1000 640 760 640Z" fill="#b5b5b5"/>
<path d="M600 640 1090 560V770H640Z" fill="#d9d9d9"/></g></svg>
  <span class="t" style="left:124.10px;top:21.002px;font-size:17.4px;font-weight:700;color:#101c4c;letter-spacing:0.905px;">talentlms</span>
  <span class="t" style="left:490.90px;top:24.004px;font-size:11px;color:#5b6472;letter-spacing:0.088px;">Search</span>
  <span class="t" style="left:1027.40px;top:18.010px;font-size:11.2px;font-weight:700;letter-spacing:-0.032px;-webkit-text-stroke:0;">Wilma Morris</span>
  <span class="t" style="left:1027.40px;top:33.010px;font-size:8.8px;color:#1f2937;letter-spacing:0.039px;">Administrator</span>
  <span class="t" style="left:108.70px;top:140.012px;font-size:10.4px;color:#dbe6f7;letter-spacing:-0.009px;">Health and Safety / Workplace Safety</span>
  <span class="t" style="left:109.40px;top:181.011px;font-size:23.3px;color:#ffffff;letter-spacing:0.332px;-webkit-text-stroke:1px #fff;">Workplace Violence Prevention</span>
  <span class="t" style="left:108.70px;top:215.011px;font-size:11.9px;color:#ffffff;">Train employees to prevent and safely respond to workplace violence.</span>
  <span class="t" style="left:756.00px;top:125.002px;font-size:8.4px;font-weight:700;color:#1f2937;letter-spacing:-0.255px;-webkit-text-stroke:0;">1h 30m</span>
  <span class="t" style="left:662.80px;top:276.007px;font-size:9.8px;font-weight:700;color:#1e293b;letter-spacing:-0.145px;-webkit-text-stroke:0;">Get this course</span>
  <span class="t" style="left:102.80px;top:373.011px;font-size:15.3px;letter-spacing:0.388px;-webkit-text-stroke:.7px #0d1117;">Description</span>
  <span class="t" style="left:779.60px;top:376.009px;font-size:10.4px;font-weight:700;letter-spacing:-0.142px;-webkit-text-stroke:0;">Edit</span>
  <span class="t" style="left:103.30px;top:414.013px;font-size:10.45px;letter-spacing:-0.006px;">When the unthinkable happens, knowing how to respond quickly and safely to workplace violence can help protect employees&rsquo; lives and well-being. This</span>
  <span class="t" style="left:103.30px;top:430.010px;font-size:10.45px;letter-spacing:0.020px;">training teaches employees how to help prevent workplace violence through reporting, best practices for intervening in and de-escalating violence in the</span>
  <span class="t" style="left:103.30px;top:446.013px;font-size:10.45px;letter-spacing:0.007px;">workplace, and how best to protect oneself in extremely violent situations, such as active shooter scenarios.</span>
  <span class="t" style="left:103.00px;top:511.008px;font-size:15.3px;letter-spacing:0.365px;-webkit-text-stroke:.7px #0d1117;">Course content</span>
  <span class="t" style="left:103.30px;top:532.010px;font-size:11.2px;color:#9b9fbb;letter-spacing:0.096px;">All units must be completed</span>
  <span class="t" style="left:741.00px;top:521.011px;font-size:10.6px;font-weight:700;letter-spacing:-0.053px;-webkit-text-stroke:0;">Add course</span>
  <span class="t" style="left:130.40px;top:571.012px;font-size:10.4px;font-weight:700;letter-spacing:-0.029px;-webkit-text-stroke:0;">Getting started</span>
  <span class="t" style="left:739.80px;top:572.016px;font-size:9.0px;color:#6b7280;letter-spacing:0.097px;">1 chapters</span>
  <span class="t" style="left:161.80px;top:608.008px;font-size:10.7px;color:#4b5565;letter-spacing:0.027px;">Workplace Violence Prevention</span>
  <span class="t" style="left:905.70px;top:101.014px;font-size:12.0px;color:#8d98ad;letter-spacing:0.154px;">Statistics</span>
  <span class="t" style="left:1037.60px;top:102.015px;font-size:11.5px;font-weight:700;color:#123a94;letter-spacing:-0.071px;-webkit-text-stroke:0;">Learners</span>
  <span class="t" style="left:863.10px;top:136.003px;font-size:10.4px;color:#4b5563;letter-spacing:0.053px;">32 Learners</span>
  <span class="t" style="left:908.90px;top:173.014px;font-size:10.25px;letter-spacing:-0.039px;">Jessica Diaz</span>
  <span class="t" style="left:908.90px;top:216.005px;font-size:10.25px;letter-spacing:-0.120px;">Devon Lane</span>
  <span class="t" style="left:908.90px;top:256.008px;font-size:10.25px;letter-spacing:0.109px;">Courtney Henry</span>
  <span class="t" style="left:908.90px;top:297.011px;font-size:10.25px;letter-spacing:0.037px;">Nancy W. Terry</span>
  <span class="t" style="left:908.90px;top:337.014px;font-size:10.25px;letter-spacing:0.048px;">Arlene McCoy</span>
  <span class="t" style="left:908.90px;top:377.002px;font-size:10.25px;letter-spacing:-0.181px;">Susan K. Bien</span>
  <span class="t" style="left:908.90px;top:417.005px;font-size:10.25px;letter-spacing:-0.077px;">Ronald Richards</span>
  <span class="t" style="left:966.10px;top:477.000px;font-size:11.2px;letter-spacing:0.063px;-webkit-text-stroke:.45px #0d1117;">View all</span>
  <span class="t" style="left:862.80px;top:556.011px;font-size:15.3px;letter-spacing:0.140px;-webkit-text-stroke:.7px #0d1117;">Related courses</span>
  <span class="t" style="left:941.70px;top:598.011px;font-size:10.7px;letter-spacing:-0.032px;">Harassment Prevention: US</span>
  <span class="t" style="left:941.70px;top:610.011px;font-size:10.7px;letter-spacing:0.112px;">Supervisor</span>
  <span class="t" style="left:941.70px;top:661.014px;font-size:10.7px;letter-spacing:0.012px;">Family and Medical Leave Act</span>
  <span class="t" style="left:941.70px;top:673.005px;font-size:10.7px;letter-spacing:-0.105px;">(FMLA)</span>
  <span class="t" style="left:941.70px;top:731.005px;font-size:10.7px;letter-spacing:0.032px;">Diversity and Inclusion Basics</span>
  <span class="t" style="left:966.60px;top:787.004px;font-size:11.2px;letter-spacing:0.063px;-webkit-text-stroke:.45px #0d1117;">View all</span>
</div>
</div>
</body>
</html>
